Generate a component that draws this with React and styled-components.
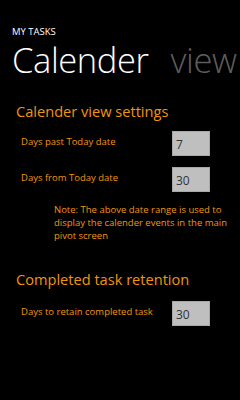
import React from 'react'
import styled, {createGlobalStyle} from 'styled-components'

const Global = createGlobalStyle`
    html, body { margin: 0; padding: 0; background: #000; }
    body { width: 240px; height: 400px; overflow: hidden; font-family: "Open Sans", "Noto Sans", sans-serif; }
`

const fields = {
    calendar: [
        {label: 'Days past Today date', value: '7'},
        {label: 'Days from Today date', value: '30'},
    ],
    retention: [
        {label: 'Days to retain completed task', value: '30'},
    ],
}

function Field({label, value}) {
    return (
        <Row>
            <Label>{label}</Label>
            <Box>{value}</Box>
        </Row>
    )
}

export default function App() {
    return (
        <Page>
            <Global/>
            <AppTitle>MY TASKS</AppTitle>
            <Pivot>
                <PivotItem $active>Calender</PivotItem>
                <PivotItem>view</PivotItem>
            </Pivot>
            <Section>
                <Heading>Calender view settings</Heading>
                {fields.calendar.map(f => <Field key={f.label} {...f}/>)}
                <Note>Note: The above date range is used to display the calender events in the main pivot screen</Note>
            </Section>
            <Section $last>
                <Heading $space={11}>Completed task retention</Heading>
                {fields.retention.map(f => <Field key={f.label} {...f}/>)}
            </Section>
        </Page>
    )
}

//---------------------------STYLES-------------------------------------------//

const Page = styled.div`
    width: 240px;
    height: 400px;
    background: #000;
    padding: 26px 0 0 12px;
    box-sizing: border-box;
    overflow: hidden;
`
const AppTitle = styled.div`
    color: #fff;
    font-size: 9.5px;
    line-height: 12px;
`
const Pivot = styled.div`
    display: flex;
    gap: 22px;
    white-space: nowrap;
`
const PivotItem = styled.div`
    font-size: 34.5px;
    font-weight: 300;
    line-height: 44px;
    letter-spacing: -0.4px;
    color: ${p => p.$active ? '#fff' : '#5e5e5e'};
`
const Section = styled.div`
    padding-left: 4px;
    margin-top: ${p => p.$last ? '26px' : '18px'};
`
const Heading = styled.div`
    color: #F0960A;
    font-size: 14.6px;
    line-height: 22px;
    margin-bottom: ${p => p.$space || 9}px;
`
const Row = styled.div`
    display: flex;
    align-items: center;
    justify-content: space-between;
    width: 189px;
    padding-left: 5px;
    height: 25px;
    margin-bottom: 11px;
`
const Label = styled.div`
    color: #F0960A;
    font-size: 9.5px;
    margin-top: -4px;
`
const Box = styled.div`
    width: 38px;
    height: 25px;
    box-sizing: border-box;
    background: #bfbfbf;
    border: 1px solid #a8a8a8;
    color: #333;
    font-size: 12px;
    padding: 4px 0 0 3px;
`
const Note = styled.div`
    color: #F0960A;
    font-size: 9.5px;
    line-height: 13px;
    padding-left: 38px;
    width: 180px;
    margin-top: 4px;
`
